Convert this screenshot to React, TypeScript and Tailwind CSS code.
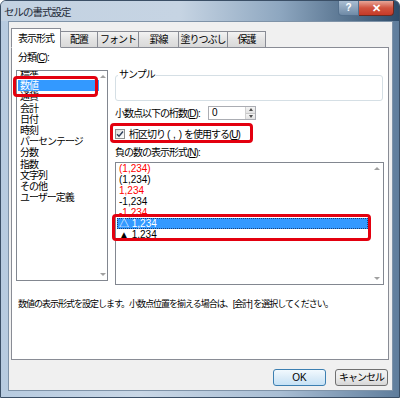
import React from "react";

const categories = [
  "標準",
  "数値",
  "通貨",
  "会計",
  "日付",
  "時刻",
  "パーセンテージ",
  "分数",
  "指数",
  "文字列",
  "その他",
  "ユーザー定義",
];

const negatives = [
  { label: "(1,234)", red: true },
  { label: "(1,234)", red: false },
  { label: "1,234", red: true },
  { label: "-1,234", red: false },
  { label: "-1,234", red: true },
  { label: "△ 1,234", red: false },
  { label: "▲ 1,234", red: false },
];

const tabs = [
  { label: "表示形式", w: "w-[50px]" },
  { label: "配置", w: "w-[37px]" },
  { label: "フォント", w: "w-[41px]" },
  { label: "罫線", w: "w-[40px]" },
  { label: "塗りつぶし", w: "w-[49px]" },
  { label: "保護", w: "w-[38px]" },
];

// tiny scroll arrows like the Win7 list boxes
const ScrollBar = ({ w }: { w: string }) => (
  <div className={`${w} h-full flex flex-col items-center justify-between py-[4px] bg-white`}>
    <span className="w-0 h-0 border-x-[3px] border-x-transparent border-b-[3px] border-b-[#a0a0a0]" />
    <span className="w-0 h-0 border-x-[3px] border-x-transparent border-t-[3px] border-t-[#a0a0a0]" />
  </div>
);

const RedBox = ({ cls }: { cls: string }) => (
  <div className={`absolute border-[3px] border-[#e3000f] rounded-[4px] pointer-events-none ${cls}`} />
);

export default function App() {
  return (
    <div className="relative w-[400px] h-[398px] overflow-hidden font-['Liberation_Sans','Noto_Sans_CJK_JP',sans-serif] text-[10px] text-black bg-[linear-gradient(90deg,#b7cbe0_0%,#c9d7e6_35%,#a9bed4_70%,#5f7d9c_100%)] border border-[#3b4f66] rounded-t-[6px]">
      {/* title bar */}
      <div className="h-[20px] flex items-start bg-[linear-gradient(90deg,#c3d2e2_0%,#c6d4e3_45%,#8ea7c0_70%,#2e4c6a_100%)]">
        <div className="pl-[3px] pt-[4px] text-[10.5px] leading-[14px] tracking-[-1px] text-[#1e2a38]">
          セルの書式設定
        </div>
        <div className="ml-auto mr-[5px] flex">
          <div className="w-[21px] h-[15px] flex items-center justify-center rounded-bl-[4px] border border-t-0 border-[#54708d] bg-[linear-gradient(180deg,#a9bdd2,#6f8aa6)] text-white text-[10px] font-bold leading-none">
            ?
          </div>
          <div className="w-[35px] h-[15px] flex items-center justify-center rounded-br-[4px] border border-t-0 border-l-0 border-[#6d2a20] bg-[linear-gradient(180deg,#e8a698,#d0533f_50%,#c53a28)] text-white text-[11px] font-bold leading-none">
            ✕
          </div>
        </div>
      </div>

      {/* client area */}
      <div className="ml-[7px] mr-[6px] h-[370px] bg-[#f0f0f0] border border-[#7f93a8]">
        {/* tabs */}
        <div className="h-[25px] flex items-end pl-[2px] relative z-10">
          {tabs.map((t, i) =>
            i === 0 ? (
              <div
                key={t.label}
                className={`${t.w} h-[20px] -mb-px bg-white border border-[#898c95] border-b-white flex items-center justify-center tracking-[-1px]`}
              >
                {t.label}
              </div>
            ) : (
              <div
                key={t.label}
                className={`${t.w} h-[16px] border-t border-r border-[#898c95] bg-[linear-gradient(180deg,#f3f3f3,#e3e3e3_50%,#d9d9d9)] flex items-center justify-center tracking-[-1px]`}
              >
                {t.label}
              </div>
            )
          )}
        </div>

        {/* tab panel */}
        <div className="ml-[2px] w-[378px] h-[313px] bg-white border border-[#898c95]">
          <div className="flex pt-[2px]">
            {/* category column */}
            <div className="ml-[4px] w-[92px]">
              <div className="h-[16px] leading-[16px] pl-[2px] tracking-[-1px]">
                分類(<span className="underline">C</span>):
              </div>
              <div className="mt-[4px] h-[211px] border border-[#828790] flex overflow-hidden">
                <div className="flex-1 mt-[-2px]">
                  {categories.map((c, i) => (
                    <div
                      key={c}
                      className={`h-[11.2px] leading-[11.2px] ml-[1px] pl-[2px] whitespace-nowrap tracking-[-1px] ${
                        i === 1 ? "bg-[#3399ff] text-white" : ""
                      }`}
                    >
                      {c}
                    </div>
                  ))}
                </div>
                <ScrollBar w="w-[8px]" />
              </div>
            </div>

            {/* right column */}
            <div className="ml-[7px] w-[269px]">
              <div className="relative mt-[25px] w-[268px] h-[26px] border border-[#d5dfe5] rounded-[3px]">
                <span className="absolute left-[2px] top-[-8px] px-[1px] bg-white leading-[14px] tracking-[-1px]">
                  サンプル
                </span>
              </div>

              <div className="mt-[5px] h-[14px] flex items-center">
                <span className="w-[93px] tracking-[-1px] whitespace-nowrap">
                  小数点以下の桁数(<span className="underline">D</span>):
                </span>
                <div className="w-[48px] h-[14px] border border-[#abadb3] flex">
                  <span className="flex-1 pl-[3px] leading-[12px] text-[10px]">0</span>
                  <div className="w-[10px] flex flex-col border-l border-[#d0d0d0]">
                    <div className="flex-1 flex items-center justify-center bg-[linear-gradient(180deg,#f4f4f4,#e2e2e2)] border-b border-[#c8c8c8]">
                      <span className="w-0 h-0 border-x-[2.5px] border-x-transparent border-b-[3px] border-b-[#505050]" />
                    </div>
                    <div className="flex-1 flex items-center justify-center bg-[linear-gradient(180deg,#f4f4f4,#e2e2e2)]">
                      <span className="w-0 h-0 border-x-[2.5px] border-x-transparent border-t-[3px] border-t-[#505050]" />
                    </div>
                  </div>
                </div>
              </div>

              <div className="mt-[7px] h-[14px] flex items-center gap-[4px]">
                <div className="w-[10px] h-[10px] border border-[#8e8f8f] bg-[linear-gradient(135deg,#dcdcdc,#ffffff)] flex items-center justify-center">
                  <svg width="8" height="8" viewBox="0 0 8 8">
                    <path d="M1 4.2 L3 6.3 L7 1.5" fill="none" stroke="#2d3f5a" strokeWidth="1.4" />
                  </svg>
                </div>
                <span className="tracking-[-1px] whitespace-nowrap">
                  桁区切り<span className="tracking-normal px-[2px]">( , )</span>を使用する(<span className="underline">U</span>)
                </span>
              </div>

              <div className="mt-[5px] h-[14px] leading-[14px] tracking-[-1px]">
                負の数の表示形式(<span className="underline">N</span>):
              </div>

              <div className="mt-[2px] h-[123px] border border-[#828790] flex overflow-hidden">
                <div className="flex-1 mr-[2px]">
                  {negatives.map((n, i) => (
                    <div
                      key={i}
                      className={`h-[11px] leading-[9px] ml-[1px] pl-[1px] text-[10px] whitespace-nowrap border border-transparent ${
                        i === 5
                          ? "bg-[#3399ff] text-white border-dotted !border-[#1c3f73]"
                          : n.red
                          ? "text-[#ff0000]"
                          : ""
                      }`}
                    >
                      {n.label}
                    </div>
                  ))}
                </div>
                <ScrollBar w="w-[13px]" />
              </div>
            </div>
          </div>

          <div className="mt-[12px] ml-[6px] h-[14px] leading-[14px] text-[9px] tracking-[-1px] whitespace-nowrap">
            数値の表示形式を設定します。小数点位置を揃える場合は、[会計] を選択してください。
          </div>
        </div>

        {/* buttons */}
        <div className="mt-[9px] flex justify-end gap-[9px] pr-[4px]">
          <button className="w-[53px] h-[17px] rounded-[3px] border border-[#3c7fb1] bg-[linear-gradient(180deg,#f2f9fe,#dcecf8_50%,#c6e2f6)] text-[10px] leading-none">
            OK
          </button>
          <button className="w-[53px] h-[17px] rounded-[3px] border border-[#707070] bg-[linear-gradient(180deg,#f2f2f2,#ebebeb_50%,#d6d6d6)] text-[10px] leading-none tracking-[-1px]">
            キャンセル
          </button>
        </div>
      </div>

      {/* annotation boxes */}
      <RedBox cls="left-[12px] top-[75px] w-[85px] h-[21px]" />
      <RedBox cls="left-[109px] top-[122px] w-[143px] h-[20px]" />
      <RedBox cls="left-[111px] top-[213px] w-[259px] h-[27px]" />
    </div>
  );
}
